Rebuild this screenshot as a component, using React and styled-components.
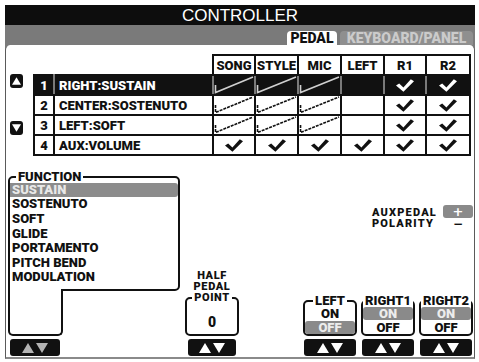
import styled, { createGlobalStyle } from 'styled-components';

const GlobalStyle = createGlobalStyle`
	html, body {
		margin: 0;
		background: #fff;
	}
	body {
		font-family: Roboto, "DejaVu Sans", sans-serif;
		color: #111;
	}
	* {
		box-sizing: border-box;
	}
`;

const Screen = styled.div`
	width: 470px;
	margin: 5px 0 0 5px;
	background: #7a7a7a;
`;
const TitleBar = styled.div`
	height: 20px;
	background: #0d0d0d;
	color: #fff;
	font: 17px/21px 'Liberation Sans', Arial, sans-serif;
	text-align: center;
`;
const TabBar = styled.div`
	height: 20px;
	display: flex;
	justify-content: flex-end;
	align-items: flex-end;
	gap: 3px;
	padding-right: 2px;
`;
const Tab = styled.div`
	width: ${(p) => p.$w}px;
	height: 14px;
	border-radius: 4px 4px 0 0;
	background: ${(p) => (p.$active ? '#fff' : '#8f8f8f')};
	color: ${(p) => (p.$active ? '#111' : '#cbcbcb')};
	font: 900 14px/15px Roboto, sans-serif;
	text-align: center;
`;
const Panel = styled.div`
	background: #fff;
	border: 1px solid #5a5a5a;
	border-top: none;
	border-bottom: 2px solid #8a8a8a;
	border-radius: 5px 5px 0 0;
	padding: 9px 0 1px;
`;

const TableSection = styled.div`
	display: flex;
	align-items: flex-start;
	gap: 10px;
	padding-left: 4px;
`;
const ScrollCol = styled.div`
	display: flex;
	flex-direction: column;
	gap: 33px;
	padding-top: 20px;
	width: 13px;
`;
const ScrollBtn = styled.div`
	width: 13px;
	height: 14px;
	background: #111;
	border-radius: 3px;
	display: flex;
	align-items: center;
	justify-content: center;
`;
const Grid = styled.table`
	border-collapse: collapse;
	table-layout: fixed;
	width: 436px;
	font: 900 13px/1 Roboto, sans-serif;
`;
const Row = styled.tr`
	background: ${(p) => (p.$sel ? '#111' : '#fff')};
	color: ${(p) => (p.$sel ? '#fff' : '#111')};
`;
const Cell = styled.td`
	height: 20px;
	padding: 0;
	border: 2px solid #111;
	border-left-color: ${(p) => (p.$sel && !p.$first ? '#7a7a7a' : '#111')};
	border-right-color: ${(p) => (p.$sel && !p.$last ? '#7a7a7a' : '#111')};
	text-align: ${(p) => (p.$left ? 'left' : 'center')};
	padding-left: ${(p) => (p.$left ? '4px' : '0')};
	vertical-align: middle;
`;
const Blank = styled.td`
	border: none;
	padding: 0;
`;
const HeadCell = styled.th`
	height: 20px;
	padding: 0;
	border: 2px solid #111;
	background: #fff;
	font-weight: 900;
	text-align: center;
`;
const SlashSvg = styled.svg`
	display: block;
	width: 100%;
	height: 18px;
`;
const CheckSvg = styled.svg`
	display: block;
	margin: 0 auto;
`;

const Lower = styled.div`
	display: flex;
	align-items: flex-end;
	height: 185px;
	margin-top: 15px;
	padding: 0 1px 0 2px;
`;
const FuncCol = styled.div`
	width: 172px;
	display: flex;
	flex-direction: column;
`;
const FuncFrame = styled.div`
	position: relative;
	margin-top: 5px;
	padding: 5px 0 4px;
	border: 2px solid #111;
	border-radius: 5px 5px 5px 0;
`;
const FuncTitle = styled.div`
	position: absolute;
	top: -7px;
	left: 6px;
	padding: 0 2px;
	background: #fff;
	font: 900 13px/11px Roboto, sans-serif;
`;
const FuncItem = styled.div`
	height: 14.6px;
	padding-left: 2px;
	font: 900 13px/14.6px Roboto, sans-serif;
	border-radius: 0 3px 3px 0;
	background: ${(p) => (p.$sel ? '#8c8c8c' : 'transparent')};
	color: ${(p) => (p.$sel ? '#e8e8e8' : '#111')};
`;
const FuncStub = styled.div`
	position: relative;
	width: 55px;
	height: 47px;
	margin-top: -2px;
	background: #fff;
	border: 2px solid #111;
	border-top: none;
	border-radius: 0 0 5px 5px;
`;
const Frame = styled.fieldset`
	margin: 0;
	min-width: 0;
	padding: ${(p) => p.$pad || '0'};
	border: 2px solid #111;
	border-radius: 5px;
	text-align: center;
`;
const FrameLegend = styled.legend`
	padding: 0 2px;
	margin: 0 auto;
	font: 900 ${(p) => p.$size || 13}px/${(p) => p.$lh || 12}px Roboto, sans-serif;
	letter-spacing: ${(p) => p.$ls || 0}px;
`;
const ArrowBtn = styled.div`
	height: 17px;
	width: ${(p) => (p.$w ? `${p.$w}px` : 'auto')};
	margin: 3px ${(p) => p.$mx || 0}px 0;
	background: #111;
	border-radius: 3px;
	display: flex;
	align-items: center;
	justify-content: center;
	gap: 2px;
`;

const HalfCol = styled.div`
	width: 54px;
	margin-left: 5px;
	display: flex;
	flex-direction: column;
	text-align: center;
`;
const HalfLabel = styled.div`
	font: 900 11px/11px Roboto, sans-serif;
	letter-spacing: 0.6px;
`;
const HalfValue = styled.div`
	font: 900 14px/14px Roboto, sans-serif;
`;

const RightPart = styled.div`
	flex: 1;
	align-self: stretch;
	display: flex;
	flex-direction: column;
	align-items: flex-end;
	justify-content: space-between;
	padding-top: 34px;
`;
const Aux = styled.div`
	display: flex;
	align-items: flex-start;
	gap: 6px;
`;
const AuxLabel = styled.div`
	margin-top: 2px;
	font: 900 11px/11px Roboto, sans-serif;
	letter-spacing: 1.2px;
`;
const PolarityCol = styled.div`
	width: 30px;
	display: flex;
	flex-direction: column;
	align-items: center;
`;
const Plus = styled.div`
	width: 30px;
	height: 13px;
	border-radius: 3px;
	background: #8a8a8a;
	color: #fff;
	font: 700 13px/13px 'DejaVu Sans', sans-serif;
	text-align: center;
`;
const Minus = styled.div`
	font: 700 12px/12px 'DejaVu Sans', sans-serif;
`;
const SwitchRow = styled.div`
	display: flex;
	gap: 4px;
`;
const SwitchCol = styled.div`
	width: 54px;
	display: flex;
	flex-direction: column;
`;
const Option = styled.div`
	height: 13px;
	margin-top: ${(p) => (p.$second ? '1px' : '0')};
	border-radius: 3px;
	font: 900 13px/13px Roboto, sans-serif;
	background: ${(p) => (p.$on ? '#8a8a8a' : 'transparent')};
	color: ${(p) => (p.$on ? '#ececec' : '#111')};
`;

const Slash = ({ sel }) => (
	<SlashSvg viewBox="0 0 40 18" preserveAspectRatio="none">
		<path
			d="M1.5 9 V16.5 L39 1"
			fill="none"
			stroke={sel ? '#d0d0d0' : '#111'}
			strokeWidth="1.6"
			strokeDasharray={sel ? undefined : '3 1'}
			vectorEffect="non-scaling-stroke"
		/>
	</SlashSvg>
);

const Check = ({ sel }) => (
	<CheckSvg width="18" height="13" viewBox="0 0 17 12">
		<polygon points="0,6 3,4 7,8 14,0 17,2 7,12" fill={sel ? '#fff' : '#111'} />
	</CheckSvg>
);

const Tri = ({ down, color = '#fff', w = 12, h = 10 }) => (
	<svg width={w} height={h} viewBox="0 0 12 10">
		<polygon points={down ? '0,0 12,0 6,10' : '6,0 12,10 0,10'} fill={color} />
	</svg>
);

const Arrows = ({ color, ...rest }) => (
	<ArrowBtn {...rest}>
		<Tri color={color} />
		<Tri down color={color} />
	</ArrowBtn>
);

const columns = ['SONG', 'STYLE', 'MIC', 'LEFT', 'R1', 'R2'];
const pedals = [
	{ no: 1, name: 'RIGHT:SUSTAIN', marks: 'sssxcc' },
	{ no: 2, name: 'CENTER:SOSTENUTO', marks: 'sssxcc' },
	{ no: 3, name: 'LEFT:SOFT', marks: 'sssxcc' },
	{ no: 4, name: 'AUX:VOLUME', marks: 'cccccc' },
];
const functions = ['SUSTAIN', 'SOSTENUTO', 'SOFT', 'GLIDE', 'PORTAMENTO', 'PITCH BEND', 'MODULATION'];
const parts = [
	{ label: 'LEFT', on: false },
	{ label: 'RIGHT1', on: true },
	{ label: 'RIGHT2', on: true },
];

const App = () => {
	return (
		<Screen>
			<GlobalStyle />
			<TitleBar>CONTROLLER</TitleBar>
			<TabBar>
				<Tab $active $w={50}>PEDAL</Tab>
				<Tab $w={133}>KEYBOARD/PANEL</Tab>
			</TabBar>
			<Panel>
				<TableSection>
					<ScrollCol>
						<ScrollBtn>
							<Tri w={9} h={8} />
						</ScrollBtn>
						<ScrollBtn>
							<Tri down w={9} h={8} />
						</ScrollBtn>
					</ScrollCol>
					<Grid>
						<colgroup>
							<col style={{ width: 20 }} />
							<col style={{ width: 159 }} />
							<col style={{ width: 42 }} />
							<col style={{ width: 43 }} />
							<col style={{ width: 43 }} />
							<col style={{ width: 43 }} />
							<col style={{ width: 42 }} />
							<col style={{ width: 44 }} />
						</colgroup>
						<thead>
							<tr>
								<Blank />
								<Blank />
								{columns.map((c) => (
									<HeadCell key={c}>{c}</HeadCell>
								))}
							</tr>
						</thead>
						<tbody>
							{pedals.map((p) => {
								const sel = p.no === 1;
								return (
									<Row key={p.no} $sel={sel}>
										<Cell $sel={sel} $first>{p.no}</Cell>
										<Cell $sel={sel} $left>{p.name}</Cell>
										{p.marks.split('').map((m, i) => (
											<Cell key={i} $sel={sel} $last={i === 5}>
												{m === 's' && <Slash sel={sel} />}
												{m === 'c' && <Check sel={sel} />}
											</Cell>
										))}
									</Row>
								);
							})}
						</tbody>
					</Grid>
				</TableSection>

				<Lower>
					<FuncCol>
						<FuncFrame>
							<FuncTitle>FUNCTION</FuncTitle>
							{functions.map((f, i) => (
								<FuncItem key={f} $sel={i === 0}>{f}</FuncItem>
							))}
						</FuncFrame>
						<FuncStub />
						<Arrows $w={50} $mx={2} color="#b4b4b4" />
					</FuncCol>

					<HalfCol>
						<HalfLabel>HALF</HalfLabel>
						<HalfLabel>PEDAL</HalfLabel>
						<Frame $pad="12px 0 5px">
							<FrameLegend $size={11} $lh={11} $ls={0.6}>POINT</FrameLegend>
							<HalfValue>0</HalfValue>
						</Frame>
						<Arrows $mx={3} />
					</HalfCol>

					<RightPart>
						<Aux>
							<AuxLabel>
								AUXPEDAL
								<br />
								POLARITY
							</AuxLabel>
							<PolarityCol>
								<Plus>+</Plus>
								<Minus>−</Minus>
							</PolarityCol>
						</Aux>
						<SwitchRow>
							{parts.map((p) => (
								<SwitchCol key={p.label}>
									<Frame $pad="0">
										<FrameLegend>{p.label}</FrameLegend>
										<Option $on={p.on}>ON</Option>
										<Option $second $on={!p.on}>OFF</Option>
									</Frame>
									<Arrows $mx={1} />
								</SwitchCol>
							))}
						</SwitchRow>
					</RightPart>
				</Lower>
			</Panel>
		</Screen>
	);
};

export default App;
